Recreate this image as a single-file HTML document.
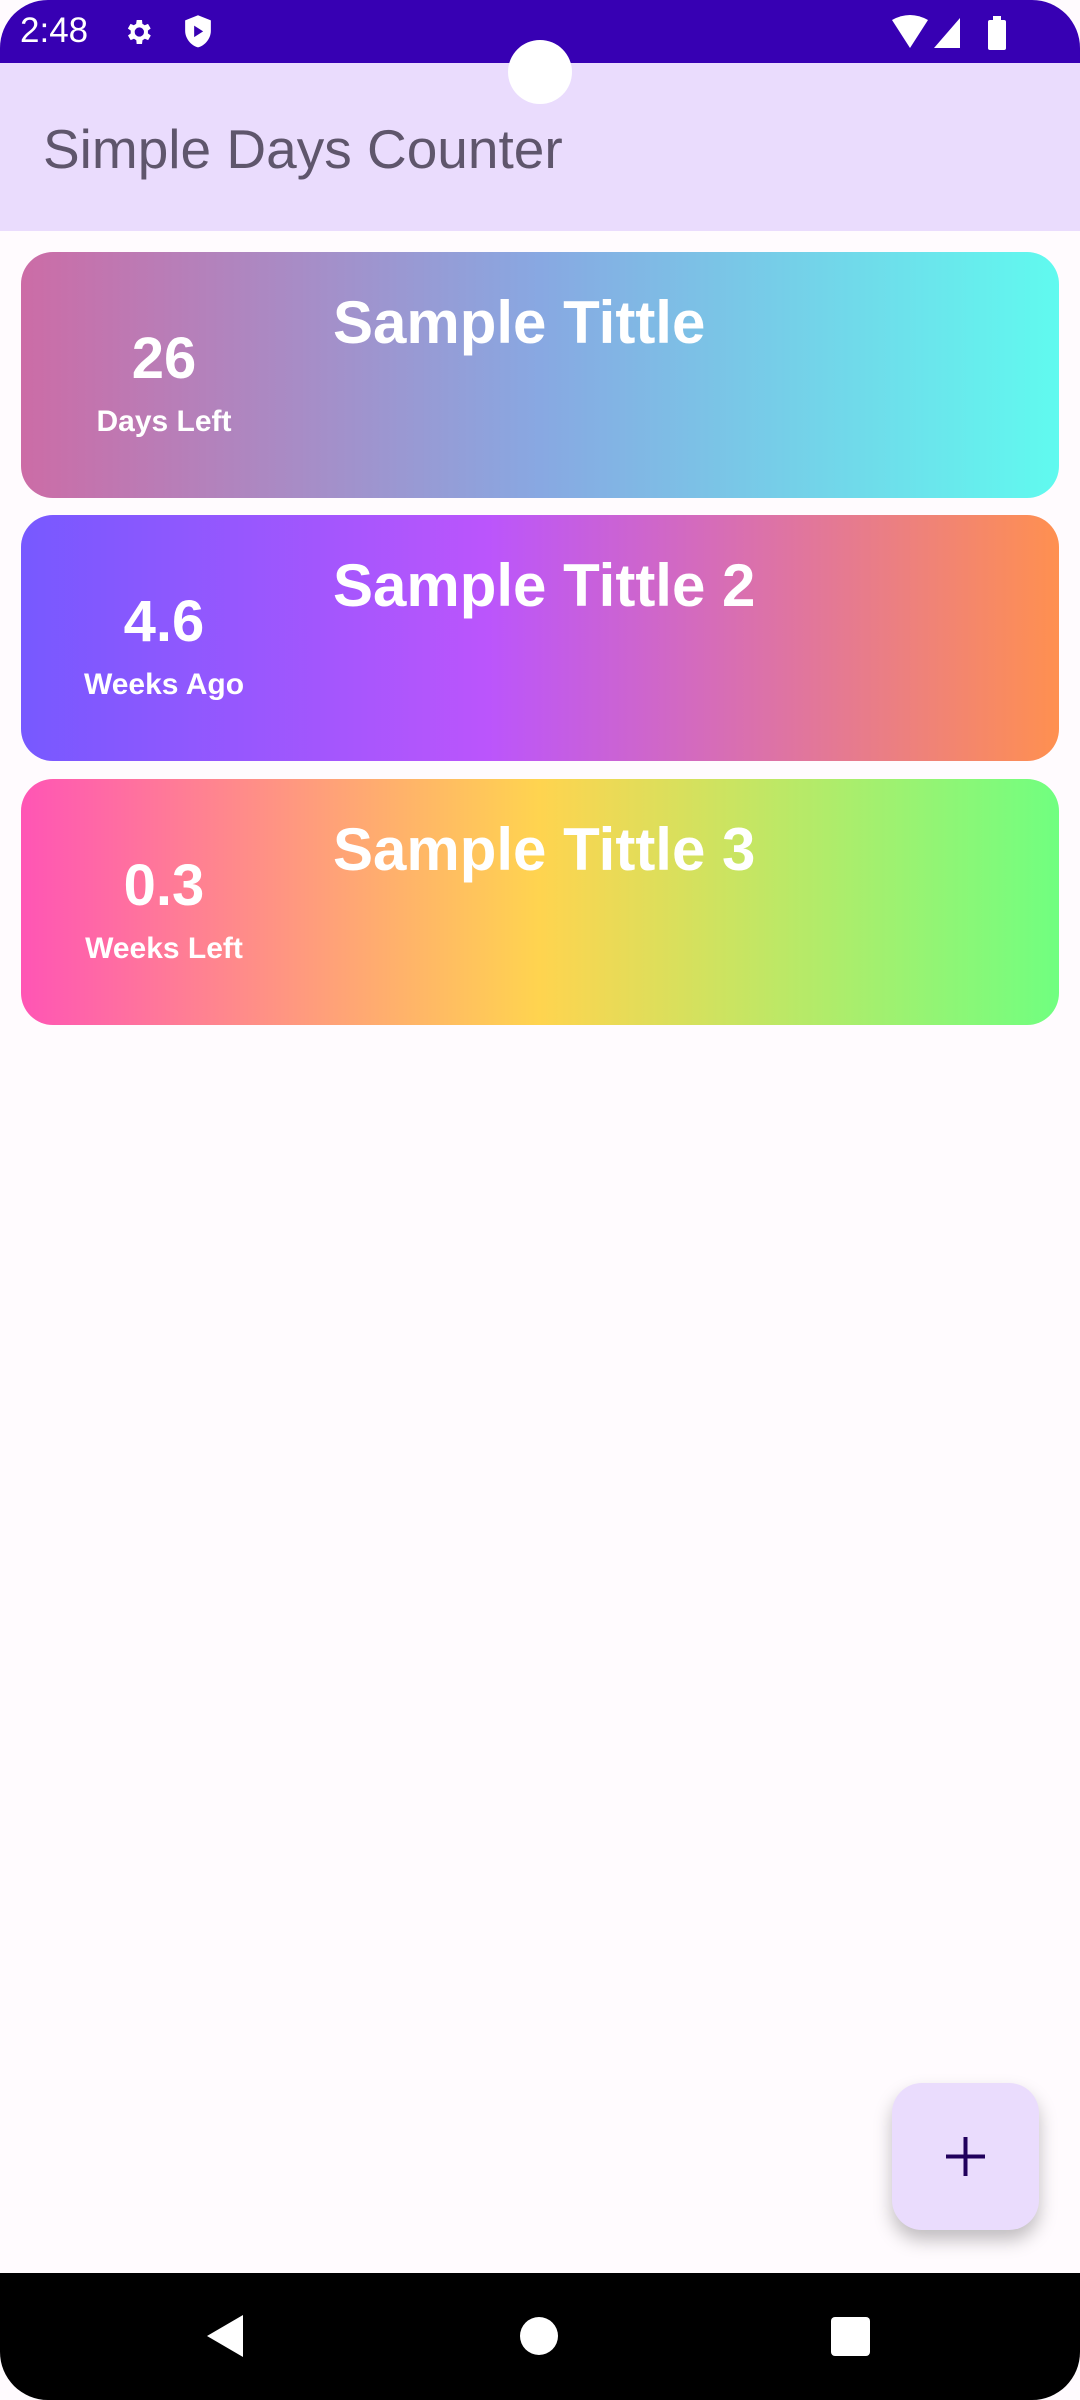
<!DOCTYPE html>
<html><head><meta charset="utf-8"><style>
*{margin:0;padding:0;box-sizing:border-box}
body{width:1080px;height:2400px;background:#fffbfe;font-family:"Liberation Sans",Roboto,sans-serif;position:relative;overflow:hidden}
.status{position:absolute;left:0;top:0;width:1080px;height:63px;background:#3700b3;border-radius:48px 48px 0 0;color:#fff}
.appbar{position:absolute;left:0;top:63px;width:1080px;height:168px;background:#eadcfd}
.appbar span{position:absolute;left:43px;top:54px;font-size:55px;color:#5f566c}
.cam{position:absolute;left:508px;top:40px;width:64px;height:64px;border-radius:50%;background:#fff}
.card{position:absolute;left:21px;width:1038px;height:246px;border-radius:32px;color:#fff;font-weight:bold}
.num{position:absolute;left:0;width:286px;text-align:center;top:73px;font-size:58px}
.lbl{position:absolute;left:0;width:286px;text-align:center;top:153px;font-size:30px}
.ttl{position:absolute;left:312px;top:36px;font-size:60px}
.fab{position:absolute;left:892px;top:2083px;width:147px;height:147px;border-radius:30px;background:#eadcfd;box-shadow:0 10px 18px rgba(0,0,0,.25)}
.nav{position:absolute;left:0;top:2273px;width:1080px;height:127px;background:#000;border-radius:0 0 48px 48px}
</style></head><body>
<div class="status">
<span style="position:absolute;left:20px;top:11px;font-size:35px">2:48</span>
<svg style="position:absolute;left:122px;top:16px" width="32" height="32" viewBox="0 0 24 24"><path fill="#fff" d="M19.4 13a7.5 7.5 0 000-2l2.1-1.6-2-3.5-2.5 1a7 7 0 00-1.700-1L15 3h-4l-.4 2.9a7 7 0 00-1.7 1l-2.5-1-2 3.5L6.6 11a7.5 7.5 0 000 2l-2.1 1.6 2 3.5 2.5-1a7 7 0 001.7 1L11 21h4l.4-2.9a7 7 0 001.7-1l2.5 1 2-3.5zM13 15.5a3.5 3.5 0 110-7 3.5 3.5 0 010 7z"/></svg>
<svg style="position:absolute;left:182px;top:14px" width="32" height="36" viewBox="0 0 24 28"><path fill="#fff" d="M12 1L2 5v8c0 6 4.5 11.5 10 13 5.5-1.5 10-7 10-13V5z"/><path fill="#3700b3" d="M9 9v9l7-4.5z"/></svg>
<svg style="position:absolute;left:890px;top:14px" width="150" height="36" viewBox="0 0 150 36"><path fill="#fff" d="M2 6q18-10 36 0L20 34z"/><path fill="#fff" d="M44 34L70 4v30z"/><rect x="98" y="6" width="18" height="30" rx="2" fill="#fff"/><rect x="103" y="2" width="8" height="5" fill="#fff"/></svg>
</div>
<div class="appbar"><span>Simple Days Counter</span></div>
<div class="cam"></div>
<div class="card" style="top:252px;background:linear-gradient(90deg,#cc6ca6,#88a8e2 50%,#60faef)"><div class="num">26</div><div class="lbl">Days Left</div><div class="ttl">Sample Tittle</div></div>
<div class="card" style="top:515px;background:linear-gradient(90deg,#7759ff,#bb55fc 45%,#ff9050)"><div class="num">4.6</div><div class="lbl">Weeks Ago</div><div class="ttl">Sample Tittle 2</div></div>
<div class="card" style="top:779px;background:linear-gradient(90deg,#ff55b5,#ffd44f 50%,#70ff80)"><div class="num">0.3</div><div class="lbl">Weeks Left</div><div class="ttl">Sample Tittle 3</div></div>
<div class="fab"><svg style="position:absolute;left:54px;top:54px" width="39" height="39" viewBox="0 0 39 39"><path d="M19.5 0v39M0 19.5h39" stroke="#21005d" stroke-width="4"/></svg></div>
<div class="nav">
<svg style="position:absolute;left:205px;top:40px" width="40" height="46" viewBox="0 0 40 46"><path fill="#fff" d="M38 2v42L2 23z"/></svg>
<div style="position:absolute;left:520px;top:44px;width:38px;height:38px;border-radius:50%;background:#fff"></div>
<div style="position:absolute;left:831px;top:44px;width:39px;height:39px;border-radius:4px;background:#fff"></div>
</div>
</body></html>
